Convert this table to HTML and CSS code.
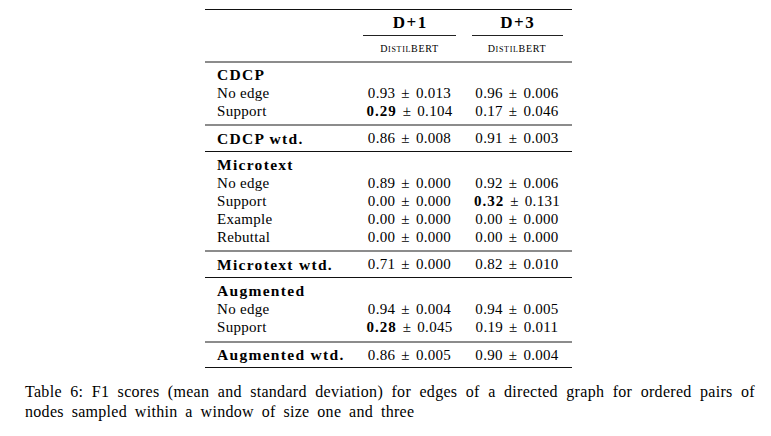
FILE: index.html
```html
<!DOCTYPE html>
<html lang="en">
<head>
<meta charset="utf-8">
<title>Table 6</title>
<link rel="stylesheet" href="styles.css">
</head>
<body>
<div class="page">
  <div class="table">
    <div class="rule-dark"></div>
    <div class="row head">
      <div></div><div class="hb">D+1</div><div class="hb">D+3</div>
    </div>
    <div class="row cmid"><div></div><div class="cm cm1"></div><div class="cm cm2"></div></div>
    <div class="row sub">
      <div></div>
      <div class="sc">D<span class="sm">istil</span>BERT</div>
      <div class="sc">D<span class="sm">istil</span>BERT</div>
    </div>
    <div class="rule-gray"></div>

    <div class="group first">
      <div class="row line"><div class="lab lab-b">CDCP</div><div></div><div></div></div>
      <div class="row line"><div class="lab">No edge</div><div class="num">0.93 &plusmn; 0.013</div><div class="num">0.96 &plusmn; 0.006</div></div>
      <div class="row line"><div class="lab">Support</div><div class="num"><span class="bn">0.29</span> &plusmn; 0.104</div><div class="num">0.17 &plusmn; 0.046</div></div>
    </div>
    <div class="rule-gray"></div>
    <div class="row wtd"><div class="lab lab-b">CDCP wtd.</div><div class="num">0.86 &plusmn; 0.008</div><div class="num">0.91 &plusmn; 0.003</div></div>
    <div class="rule-dark"></div>

    <div class="group">
      <div class="row line"><div class="lab lab-b">Microtext</div><div></div><div></div></div>
      <div class="row line"><div class="lab">No edge</div><div class="num">0.89 &plusmn; 0.000</div><div class="num">0.92 &plusmn; 0.006</div></div>
      <div class="row line"><div class="lab">Support</div><div class="num">0.00 &plusmn; 0.000</div><div class="num"><span class="bn">0.32</span> &plusmn; 0.131</div></div>
      <div class="row line"><div class="lab">Example</div><div class="num">0.00 &plusmn; 0.000</div><div class="num">0.00 &plusmn; 0.000</div></div>
      <div class="row line"><div class="lab">Rebuttal</div><div class="num">0.00 &plusmn; 0.000</div><div class="num">0.00 &plusmn; 0.000</div></div>
    </div>
    <div class="rule-gray"></div>
    <div class="row wtd"><div class="lab lab-b">Microtext wtd.</div><div class="num">0.71 &plusmn; 0.000</div><div class="num">0.82 &plusmn; 0.010</div></div>
    <div class="rule-dark"></div>

    <div class="group last">
      <div class="row line"><div class="lab lab-b">Augmented</div><div></div><div></div></div>
      <div class="row line"><div class="lab">No edge</div><div class="num">0.94 &plusmn; 0.004</div><div class="num">0.94 &plusmn; 0.005</div></div>
      <div class="row line"><div class="lab">Support</div><div class="num"><span class="bn">0.28</span> &plusmn; 0.045</div><div class="num">0.19 &plusmn; 0.011</div></div>
    </div>
    <div class="rule-gray"></div>
    <div class="row wtd wtd-last"><div class="lab lab-b">Augmented wtd.</div><div class="num">0.86 &plusmn; 0.005</div><div class="num">0.90 &plusmn; 0.004</div></div>
    <div class="rule-dark"></div>
  </div>

  <div class="caption">
    <div class="cap1">Table 6: F1 scores (mean and standard deviation) for edges of a directed graph for ordered pairs of</div>
    <div class="cap2">nodes sampled within a window of size one and three</div>
  </div>
</div>
</body>
</html>
```

FILE: styles.css
```css
* {
  box-sizing: border-box;
  margin: 0;
  padding: 0;
}

body {
  margin: 0;
  background: #ffffff;
  color: #000000;
  font-family: "Liberation Serif", "Times New Roman", serif;
}

.page {
  padding-top: 9px;
}

.table {
  margin-left: 205px;
  width: 367px;
  display: flex;
  flex-direction: column;
}

.rule-dark {
  height: 1px;
  background: #111111;
}

.rule-gray {
  height: 2px;
  background: #8c8c8c;
}

.row {
  display: grid;
  grid-template-columns: 152px 105px 110px;
}

.head {
  height: 25px;
  align-items: center;
}

.hb {
  font-weight: bold;
  font-size: 17px;
  letter-spacing: 1.5px;
  padding-left: 1.5px;
  text-align: center;
}

.cmid {
  height: 1px;
}

.cm {
  height: 1px;
  background: #222222;
}

.cm1 {
  margin: 0 6px;
}

.cm2 {
  margin: 0 9px 0 10px;
}

.sub {
  height: 25px;
  align-items: center;
}

.sc {
  font-size: 10px;
  letter-spacing: 0.7px;
  text-align: center;
}

.sm {
  font-size: 8px;
  text-transform: uppercase;
}

.group {
  padding: 4px 0;
}

.group.first {
  padding-top: 3px;
}

.group.last {
  padding-bottom: 5px;
}

.line {
  height: 18px;
  line-height: 18px;
  font-size: 15px;
  letter-spacing: 0.3px;
}

.wtd {
  height: 25px;
  align-items: center;
  font-size: 15px;
  letter-spacing: 0.3px;
}

.wtd-last {
  height: 24px;
}

.lab {
  padding-left: 12px;
  white-space: nowrap;
}

.lab-b {
  font-weight: bold;
  font-size: 15.5px;
  letter-spacing: 1.3px;
}

.num {
  text-align: center;
  word-spacing: 2px;
  white-space: nowrap;
}

.bn {
  font-weight: bold;
  letter-spacing: 1px;
}

.caption {
  margin: 14px 0 0 25px;
  width: 730px;
  font-size: 16px;
  line-height: 20px;
  letter-spacing: 0.3px;
}

.cap1 {
  text-align: justify;
  text-align-last: justify;
  white-space: nowrap;
}

.cap2 {
  word-spacing: 3.5px;
}
```
